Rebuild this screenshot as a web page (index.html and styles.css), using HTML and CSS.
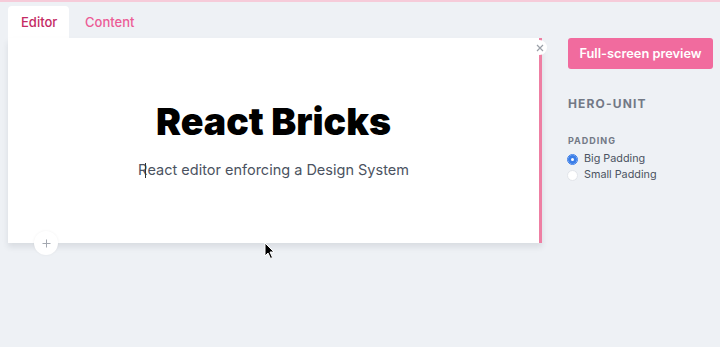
FILE: index.html
```html
<!DOCTYPE html>
<html>
<head>
<meta charset="utf-8">
<link rel="stylesheet" href="styles.css">
</head>
<body>
<div class="topline"></div>
<div class="app">
  <div class="editor-col">
    <div class="tabs">
      <div class="tab tab-active">Editor</div>
      <div class="tab">Content</div>
    </div>
    <div class="canvas">
      <h1 class="title">React Bricks</h1>
      <p class="subtitle">R<span class="caret"></span>eact editor enforcing a Design System</p>
      <div class="close-btn">
        <svg width="8" height="8" viewBox="0 0 8 8"><path d="M1 1L7 7M7 1L1 7" stroke="#9aa0a8" stroke-width="1.2"/></svg>
      </div>
      <div class="add-btn">
        <svg width="9" height="9" viewBox="0 0 9 9"><path d="M4.5 0.5V8.5M0.5 4.5H8.5" stroke="#a3a8b0" stroke-width="1"/></svg>
      </div>
    </div>
  </div>
  <div class="sidebar">
    <button class="preview-btn">Full-screen preview</button>
    <div class="block-name">HERO-UNIT</div>
    <div class="prop-label">PADDING</div>
    <label class="radio-row"><span class="radio radio-on"></span>Big Padding</label>
    <label class="radio-row"><span class="radio"></span>Small Padding</label>
  </div>
</div>
<svg class="cursor" width="12" height="18" viewBox="0 0 12 18"><path d="M1 1V14L4 11L6.5 16.5L8.5 15.5L6 10H10Z" fill="#000" stroke="#fff" stroke-width="1"/></svg>
</body>
</html>
```

FILE: styles.css
```css
* { box-sizing: border-box; }
body {
  margin: 0;
  background: #eef1f5;
  font-family: Inter, "Noto Sans", sans-serif;
  width: 720px;
  height: 347px;
  overflow: hidden;
  position: relative;
}
.topline {
  height: 2px;
  background: #f6cbd9;
}
.app {
  display: flex;
  padding-left: 8px;
}
.editor-col {
  width: 534px;
  margin-top: 4px;
}
.tabs {
  display: flex;
  height: 32px;
}
.tab {
  font-size: 13px;
  font-weight: 500;
  color: #ec5c95;
  line-height: 32px;
  padding-left: 16px;
}
.tab-active {
  width: 61px;
  padding-left: 13px;
  background: #fff;
  color: #c42a63;
  border-radius: 4px 4px 0 0;
}
.canvas {
  position: relative;
  height: 205px;
  background: #fff;
  border-right: 3px solid #ee7fa3;
  box-shadow: 0 4px 6px rgba(30, 40, 60, 0.1);
  padding-top: 62px;
  text-align: center;
}
.title {
  margin: 0;
  font-size: 37.5px;
  line-height: 44px;
  font-weight: 900;
  color: #000;
  letter-spacing: 0;
}
.subtitle {
  margin: 14px 0 0;
  font-size: 14.5px;
  line-height: 24px;
  color: #4b5361;
}
.caret {
  display: inline-block;
  width: 1px;
  height: 15px;
  background: #333;
  vertical-align: -3px;
  margin-left: -2px;
  margin-right: 1px;
}
.close-btn {
  position: absolute;
  top: 2px;
  right: -8px;
  width: 15px;
  height: 15px;
  border-radius: 50%;
  background: #fff;
  display: flex;
  align-items: center;
  justify-content: center;
}
.add-btn {
  position: absolute;
  left: 26px;
  top: 193px;
  width: 24px;
  height: 24px;
  border-radius: 50%;
  background: #fff;
  box-shadow: 0 0 3px rgba(0, 0, 0, 0.06);
  display: flex;
  align-items: center;
  justify-content: center;
}
.sidebar {
  margin-left: 26px;
  padding-top: 36px;
  width: 150px;
}
.preview-btn {
  display: block;
  width: 145px;
  height: 31px;
  border: 0;
  border-radius: 3px;
  background: #f16b9e;
  color: #fff;
  font-family: Inter, "Noto Sans", sans-serif;
  font-size: 12.8px;
  font-weight: 600;
  padding: 0;
}
.block-name {
  margin-top: 27px;
  font-size: 12px;
  font-weight: 700;
  letter-spacing: 1.15px;
  color: #737986;
  line-height: 16px;
}
.prop-label {
  margin-top: 23px;
  font-size: 9px;
  font-weight: 700;
  letter-spacing: 1px;
  color: #737986;
  line-height: 12px;
}
.radio-row {
  display: flex;
  align-items: center;
  font-size: 10.8px;
  color: #4b5361;
  line-height: 16px;
}
.prop-label + .radio-row { margin-top: 4px; }
.radio {
  width: 11px;
  height: 11px;
  border-radius: 50%;
  background: #fff;
  border: 1px solid #e2e5ea;
  margin-left: -1px;
  margin-right: 6px;
}
.radio-on {
  border-color: #3b7ee8;
  box-shadow: inset 0 0 0 3px #3b7ee8;
  background: #fff;
}
.cursor {
  position: absolute;
  left: 264px;
  top: 242px;
}
```
